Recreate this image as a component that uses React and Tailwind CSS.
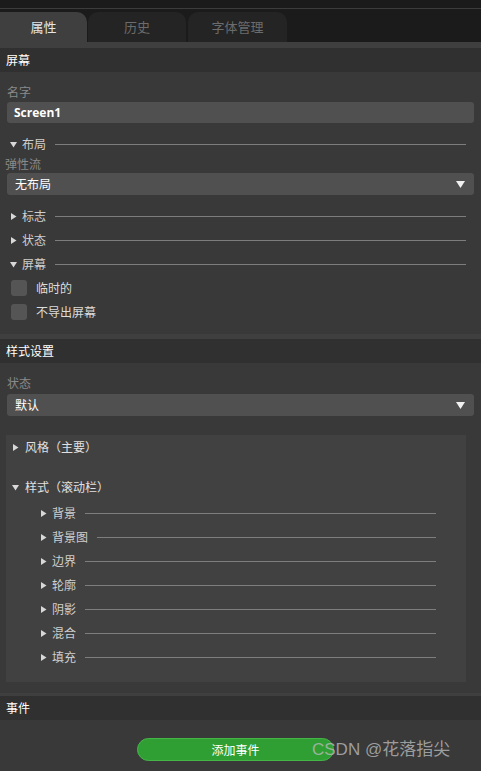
import React from "react";

const font = { fontFamily: '"Noto Sans CJK SC", "Noto Sans", sans-serif' };

function Tri({ open, className = "" }) {
  return (
    <svg width="7" height="7" viewBox="0 0 7 7" className={className}>
      {open ? (
        <polygon points="0,1 7,1 3.5,6.5" fill="#d8d8d8" />
      ) : (
        <polygon points="1,0 6.5,3.5 1,7" fill="#d8d8d8" />
      )}
    </svg>
  );
}

function Fold({ label, open, lineEnd = "mr-[15px]", gap = "gap-[5px]" }) {
  return (
    <div className={`flex items-center h-[24px] ${gap}`}>
      <Tri open={open} />
      <span className="text-[12px] text-[#cfcfcf] leading-none whitespace-nowrap">{label}</span>
      <div className={`flex-1 h-px bg-[#7d7d7d] ml-[4px] ${lineEnd}`} />
    </div>
  );
}

function Select({ value }) {
  return (
    <div className="mx-[7px] h-[22px] rounded-[3px] bg-[#505050] flex items-center justify-between pl-[8px] pr-[9px]">
      <span className="text-[12px] text-white">{value}</span>
      <svg width="9" height="7" viewBox="0 0 9 7">
        <polygon points="0,0 9,0 4.5,7" fill="#f0f0f0" />
      </svg>
    </div>
  );
}

function Header({ title }) {
  return (
    <div className="h-[24px] bg-[#303030] flex items-center px-[6px] text-[12px] text-white">{title}</div>
  );
}

function Check({ label }) {
  return (
    <div className="flex items-center h-[24px] pl-[11px] gap-[9px]">
      <div className="w-[16px] h-[16px] rounded-[3px] bg-[#555555]" />
      <span className="text-[12px] text-[#dcdcdc]">{label}</span>
    </div>
  );
}

export default function App() {
  const styleItems = ["背景", "背景图", "边界", "轮廓", "阴影", "混合", "填充"];
  return (
    <div className="relative w-[481px] h-[771px] bg-[#393939] overflow-hidden" style={font}>
      {/* tabs */}
      <div className="h-[8px] bg-[#1b1b1b]" />
      <div className="h-px bg-[#3c3c3c]" />
      <div className="h-[33px] bg-[#1b1b1b] flex items-end">
        <div className="w-[87px] h-[30px] bg-[#3f3f3f] rounded-tr-[10px] flex items-center justify-center text-[13px] text-[#e6e6e6]">属性</div>
        <div className="ml-px w-[98px] h-[30px] bg-[#242424] rounded-t-[10px] flex items-center justify-center text-[13px] text-[#6c6c6c]">历史</div>
        <div className="ml-[2px] w-[99px] h-[30px] bg-[#242424] rounded-t-[10px] flex items-center justify-center text-[13px] text-[#6c6c6c]">字体管理</div>
      </div>
      <div className="h-[6px] bg-[#3f3f3f]" />

      <Header title="屏幕" />
      <div className="pt-[12px] pb-[10px]">
        <div className="px-[7px] text-[12px] text-[#8a8a8a] leading-[16px]">名字</div>
        <div className="mx-[7px] mt-[2px] h-[21px] rounded-[3px] bg-[#505050] flex items-center px-[7px] text-[12px] font-bold text-white" style={{ fontFamily: '"Open Sans", "Noto Sans", sans-serif' }}>Screen1</div>
        <div className="mt-[9px] pl-[10px]">
          <Fold label="布局" open />
        </div>
        <div className="px-[5px] text-[12px] text-[#8a8a8a] leading-[16px] mt-0">弹性流</div>
        <div className="mt-[1px]"><Select value="无布局" /></div>
        <div className="mt-[9px] pl-[10px]">
          <Fold label="标志" />
          <Fold label="状态" />
          <Fold label="屏幕" open />
        </div>
        <Check label="临时的" />
        <Check label="不导出屏幕" />
      </div>

      <div className="h-[5px] bg-[#3f3f3f]" />
      <Header title="样式设置" />
      <div className="pt-[12px]">
        <div className="px-[7px] text-[12px] text-[#8a8a8a] leading-[16px]">状态</div>
        <div className="mt-[3px]"><Select value="默认" /></div>
        <div className="flex mt-[19px]">
          <div className="ml-[6px] w-[460px] h-[247px] bg-[#414141] pt-[2px]">
            <div className="flex items-center gap-[6px] h-[20px] pl-[6px] text-[12px] text-[#e0e0e0]">
              <Tri />
              <span>风格（主要）</span>
            </div>
            <div className="flex items-center gap-[6px] h-[20px] pl-[6px] mt-[20px] text-[12px] text-[#e0e0e0]">
              <Tri open />
              <span>样式（滚动栏）</span>
            </div>
            <div className="pl-[34px] pr-[30px] mt-[4px]">
              {styleItems.map((s) => (
                <Fold key={s} label={s} lineEnd="mr-0" />
              ))}
            </div>
          </div>
        </div>
      </div>

      <div className="h-[11px]" />
      <div className="h-[3px] bg-[#3f3f3f]" />
      <Header title="事件" />
      <div className="pt-[18px] flex">
        <div className="ml-[137px] w-[197px] h-[23px] rounded-full bg-[#2f9f33] border border-[#45b548] flex items-center justify-center text-[12px] text-white">添加事件</div>
      </div>

      <div className="absolute left-[312px] top-[737px] text-[17px] text-[#b8b8b8]/80 leading-[26px] whitespace-nowrap" style={{ fontFamily: '"Liberation Sans", "Noto Sans CJK SC", sans-serif' }}>
        CSDN @花落指尖
      </div>
    </div>
  );
}
